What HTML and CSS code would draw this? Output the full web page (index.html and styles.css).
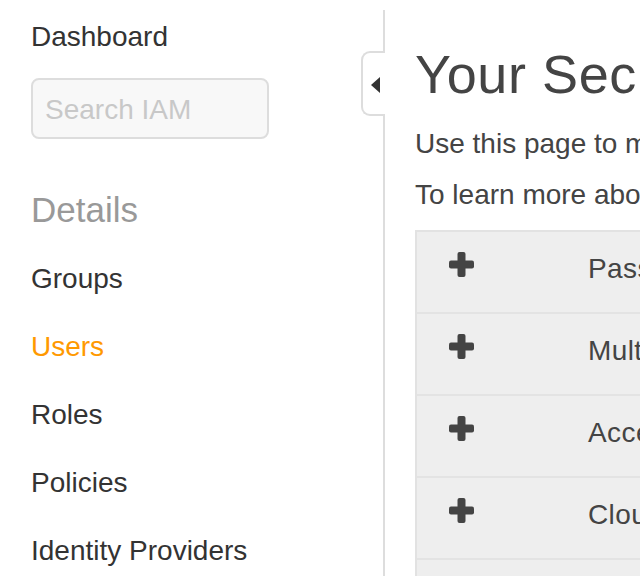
FILE: index.html
```html
<!DOCTYPE html>
<html lang="en">
<head>
<meta charset="utf-8">
<title>Your Security Credentials</title>
<link rel="stylesheet" href="styles.css">
</head>
<body>
<div class="layout">
  <aside class="sidebar">
    <a class="nav-link dashboard" href="#">Dashboard</a>
    <input class="search" type="text" placeholder="Search IAM">
    <h2 class="section-title">Details</h2>
    <ul class="nav-list">
      <li><a class="nav-item" href="#">Groups</a></li>
      <li><a class="nav-item active" href="#">Users</a></li>
      <li><a class="nav-item" href="#">Roles</a></li>
      <li><a class="nav-item" href="#">Policies</a></li>
      <li><a class="nav-item" href="#">Identity Providers</a></li>
    </ul>
    <div class="collapse-tab">
      <svg class="collapse-arrow" width="10" height="16" viewBox="0 0 10 16"><polygon points="0,8 9,0 9,16" fill="#333"/></svg>
    </div>
  </aside>
  <main class="content">
    <h1 class="title">Your Security Credentials</h1>
    <p class="intro first">Use this page to manage the credentials for your AWS account. To manage credentials for AWS Identity and Access Management (IAM) users, use the IAM Console.</p>
    <p class="intro">To learn more about the types of AWS credentials and how they're used, see AWS Security Credentials in AWS General Reference.</p>
    <div class="accordion">
      <div class="row">
        <svg class="plus" width="25" height="25" viewBox="0 0 25 25"><rect x="0" y="8.5" width="25" height="8" rx="2" fill="#444"/><rect x="8.5" y="0" width="8" height="25" rx="2" fill="#444"/></svg>
        <span class="row-label">Password</span>
      </div>
      <div class="row">
        <svg class="plus" width="25" height="25" viewBox="0 0 25 25"><rect x="0" y="8.5" width="25" height="8" rx="2" fill="#444"/><rect x="8.5" y="0" width="8" height="25" rx="2" fill="#444"/></svg>
        <span class="row-label">Multi-Factor Authentication (MFA)</span>
      </div>
      <div class="row">
        <svg class="plus" width="25" height="25" viewBox="0 0 25 25"><rect x="0" y="8.5" width="25" height="8" rx="2" fill="#444"/><rect x="8.5" y="0" width="8" height="25" rx="2" fill="#444"/></svg>
        <span class="row-label">Access Keys (Access Key ID and Secret Access Key)</span>
      </div>
      <div class="row">
        <svg class="plus" width="25" height="25" viewBox="0 0 25 25"><rect x="0" y="8.5" width="25" height="8" rx="2" fill="#444"/><rect x="8.5" y="0" width="8" height="25" rx="2" fill="#444"/></svg>
        <span class="row-label">CloudFront Key Pairs</span>
      </div>
      <div class="row">
        <svg class="plus" width="25" height="25" viewBox="0 0 25 25"><rect x="0" y="8.5" width="25" height="8" rx="2" fill="#444"/><rect x="8.5" y="0" width="8" height="25" rx="2" fill="#444"/></svg>
        <span class="row-label">X.509 Certificates</span>
      </div>
    </div>
  </main>
</div>
</body>
</html>
```

FILE: styles.css
```css
html, body {
  margin: 0;
  padding: 0;
  overflow: hidden;
  background: #fff;
}

body {
  font-family: "Liberation Sans", Arial, Helvetica, sans-serif;
  color: #333;
}

.layout {
  display: flex;
  align-items: flex-start;
  width: 1400px;
  padding-top: 10px;
}

.sidebar {
  position: relative;
  box-sizing: border-box;
  width: 385px;
  flex: 0 0 385px;
  min-height: 700px;
  padding: 8px 0 0 31px;
  border-right: 2px solid #ddd;
  display: flex;
  flex-direction: column;
  align-items: flex-start;
}

.nav-link,
.nav-item {
  display: block;
  font-size: 28px;
  color: #333;
  text-decoration: none;
}

.dashboard {
  line-height: 40px;
  margin-top: -1px;
}

.search {
  box-sizing: border-box;
  width: 238px;
  height: 61px;
  margin-top: 21px;
  padding: 3px 0 0 12px;
  border: 2px solid #ddd;
  border-radius: 8px;
  background: #f8f8f8;
  font-family: "Liberation Sans", Arial, Helvetica, sans-serif;
  font-size: 28px;
  color: #333;
  outline: none;
}

.search::placeholder {
  color: #c8c8c8;
}

.section-title {
  margin: 49px 0 0;
  font-size: 35px;
  line-height: 44px;
  font-weight: normal;
  color: #999;
}

.nav-list {
  list-style: none;
  margin: 13px 0 0;
  padding: 0;
}

.nav-item {
  line-height: 68px;
}

.nav-item.active {
  color: #f90;
}

.collapse-tab {
  position: absolute;
  top: 41px;
  right: -2px;
  box-sizing: border-box;
  width: 24px;
  height: 65px;
  background: #fff;
  border: 2px solid #ddd;
  border-right: none;
  border-radius: 9px 0 0 9px;
}

.collapse-arrow {
  position: absolute;
  left: 8px;
  top: 24px;
}

.content {
  flex: 1;
  padding-left: 30px;
  color: #444;
}

.title {
  margin: 32px 0 0;
  font-size: 54px;
  line-height: 64px;
  font-weight: normal;
  color: #444;
  letter-spacing: 0.6px;
  white-space: nowrap;
}

.intro {
  margin: 11px 0 0;
  font-size: 28px;
  line-height: 40px;
  color: #444;
  white-space: nowrap;
}

.intro.first {
  margin-top: 18px;
}

.accordion {
  margin-top: 15px;
  width: 960px;
  background: #eee;
  border-top: 2px solid #e2e2e2;
  border-left: 2px solid #e2e2e2;
}

.row {
  display: flex;
  align-items: flex-start;
  box-sizing: border-box;
  height: 82px;
  padding: 17px 0 0 32px;
  border-bottom: 2px solid #e3e3e3;
}

.plus {
  flex: 0 0 25px;
  margin-top: 3px;
}

.row-label {
  margin-left: 114px;
  font-size: 28px;
  line-height: 40px;
  color: #444;
  letter-spacing: 0.4px;
  white-space: nowrap;
}
```
